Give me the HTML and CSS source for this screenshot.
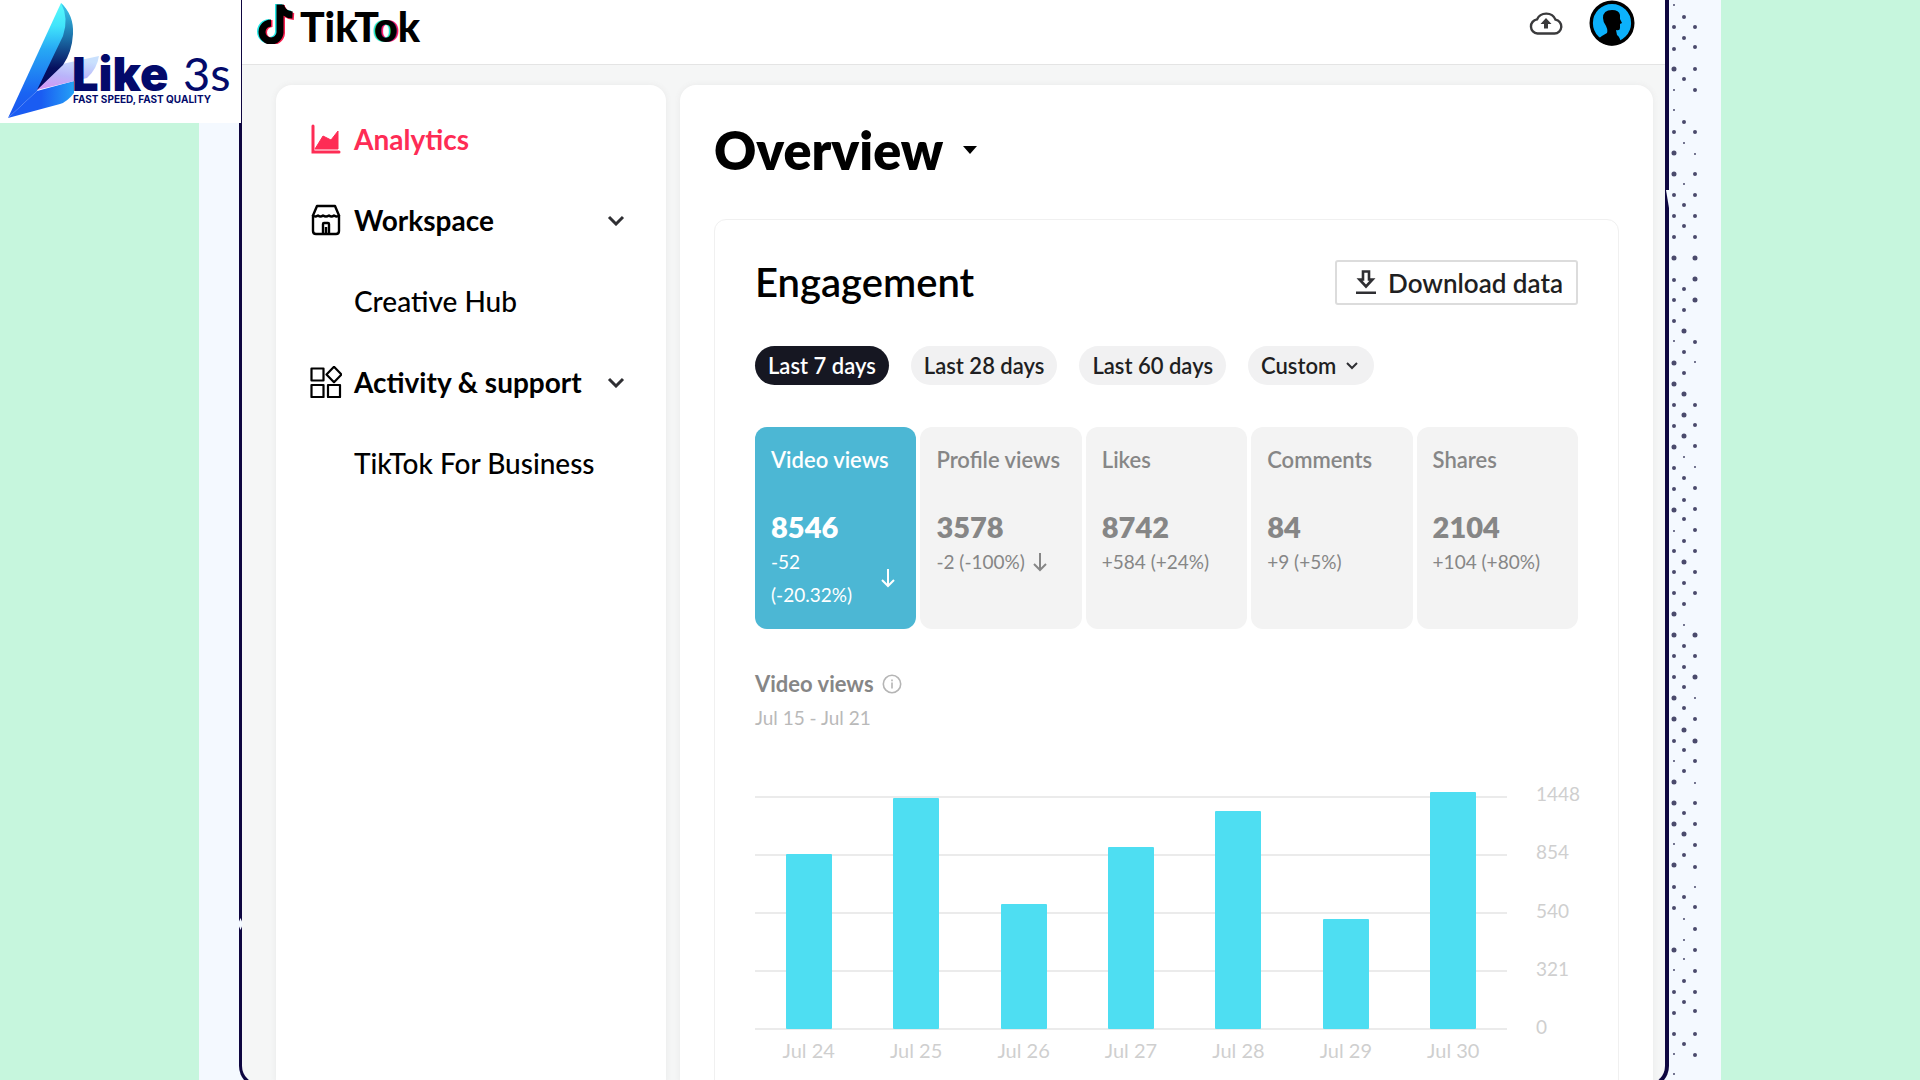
FILE: index.html
```html
<!DOCTYPE html>
<html lang="en">
<head>
<meta charset="utf-8">
<title>TikTok Analytics</title>
<link rel="stylesheet" href="styles.css">
</head>
<body>
<div class="stage">
  <svg class="dots" width="30" height="1080" viewBox="1670 0 30 1080" aria-hidden="true">
    <path class="dot-m" d="M1674 27h0M1674 49h0M1674 132h0M1674 195h0M1674 216h0M1674 237h0M1674 280h0M1674 300h0M1674 321h0M1674 405h0M1674 426h0M1674 468h0M1674 489h0M1674 551h0M1674 572h0M1674 593h0M1674 656h0M1674 677h0M1674 741h0M1674 887h0M1674 908h0M1674 992h0M1674 1013h0M1674 1034h0M1684 17h0M1684 38h0M1684 79h0M1684 122h0M1684 205h0M1684 226h0M1684 289h0M1684 310h0M1684 352h0M1684 373h0M1684 478h0M1684 500h0M1684 519h0M1684 541h0M1684 583h0M1684 604h0M1684 646h0M1684 667h0M1684 687h0M1684 708h0M1684 750h0M1684 771h0M1684 813h0M1684 855h0M1684 897h0M1684 981h0M1684 1002h0M1684 1044h0M1695 27h0M1695 47h0M1695 69h0M1695 90h0M1695 132h0M1695 174h0M1695 195h0M1695 216h0M1695 237h0M1695 342h0M1695 405h0M1695 425h0M1695 446h0M1695 488h0M1695 509h0M1695 530h0M1695 551h0M1695 572h0M1695 593h0M1695 656h0M1695 719h0M1695 761h0M1695 803h0M1695 824h0M1695 845h0M1695 867h0M1695 907h0M1695 929h0M1695 950h0M1695 971h0M1695 992h0M1695 1011h0M1695 1034h0M1695 1055h0"/>
    <path class="dot-l" d="M1674 153h0M1674 174h0M1674 258h0M1674 363h0M1674 384h0M1674 447h0M1674 510h0M1674 614h0M1674 635h0M1674 698h0M1674 719h0M1674 782h0M1674 803h0M1674 824h0M1674 865h0M1674 950h0M1684 331h0M1684 394h0M1684 415h0M1684 436h0M1684 562h0M1684 730h0M1684 834h0M1695 258h0M1695 279h0M1695 300h0M1695 635h0M1695 677h0M1695 741h0M1674 69h0"/>
    <path class="dot-s" d="M1674 5h0M1674 90h0M1674 110h0M1674 341h0M1674 531h0M1674 761h0M1674 844h0M1674 970h0M1674 1054h0M1674 1074h0M1684 143h0M1684 184h0M1684 457h0M1684 625h0M1684 919h0M1684 940h0M1684 959h0M1695 154h0M1695 362h0M1695 467h0M1695 698h0M1695 783h0M1695 887h0"/>
  </svg>
  <div class="frame">
    <header class="topbar">
      <a class="brand" href="#">
        <svg class="note" width="38" height="42" viewBox="0 0 38 42" aria-hidden="true">
          <g fill="none" stroke-width="7">
            <path stroke="#25e8e6" d="M21.500 2v28a9 9 0 1 1-9-9.500M22 4q3 8 12 8"/>
            <path stroke="#f81e4f" d="M24.500 3v28a9 9 0 1 1-9-9.500M25 6q3 8 12 8.500"/>
            <path stroke="#000" d="M23 2.500v28a9 9 0 1 1-9-9.500M23.500 4q3 8.500 12 9"/>
          </g>
        </svg>
        <span class="brand-name">TikT<span class="brand-o">o</span>k</span>
      </a>
      <button class="icon-button" aria-label="Upload">
        <svg width="34" height="24" viewBox="0 0 34 24" aria-hidden="true">
          <path fill="none" stroke="#3a3a3c" stroke-width="2.400" d="M8.500 22.500h17a7 7 0 0 0 1-13.900A10 9.500 0 0 0 8 8.400 7.100 7.100 0 0 0 8.500 22.500z"/>
          <path fill="#3a3a3c" d="M17 7l5.500 6h-3.500v4.500h-4V13h-3.500z"/>
        </svg>
      </button>
      <button class="icon-button" aria-label="Account">
        <svg width="46" height="46" viewBox="0 0 46 46" aria-hidden="true">
          <circle cx="23" cy="23" r="20.800" fill="#0cb1fb" stroke="#000" stroke-width="3.400"/>
          <path d="M9 39q5-4 9-6 1-3-1-7-3-4-3-8 0-8 9-8 7 0 8 5v4l2 4-2 1 0 4q0 3-4 2l1 5q3 2 4 8-12 7-23-4z"/>
        </svg>
      </button>
    </header>
    <div class="workspace">
      <nav class="sidebar" aria-label="Main">
        <a class="nav-item nav-active" href="#">
          <svg width="32" height="32" viewBox="0 0 32 32" aria-hidden="true"><path fill="none" stroke="#fe2c55" stroke-width="3" stroke-linecap="round" d="M3 3v26h26"/><path fill="#fe2c55" stroke="#fe2c55" stroke-linejoin="round" d="M5 26l8-13 8 4 7-9v18z"/></svg>
          <span>Analytics</span>
        </a>
        <button class="nav-item nav-group">
          <svg width="32" height="32" viewBox="0 0 32 32" fill="none" stroke="#000" stroke-width="2.400" aria-hidden="true"><path d="M7 2h18l4 9.500q-2 2-5 0-2.500 2-5 0-3 2-6 0-2.500 2-5 0-3 2-5 0z" stroke-linejoin="round"/><path d="M3 11v16q0 3 3 3h20q3 0 3-3V11M13 30V20q0-1 1-1h4q1 0 1 1v10M16 23v7"/></svg>
          <span>Workspace</span>
          <svg class="chevron" width="20" height="12" viewBox="0 0 20 12" aria-hidden="true"><path d="M3 3l7 7 7-7"/></svg>
        </button>
        <a class="nav-item nav-sub" href="#">Creative Hub</a>
        <button class="nav-item nav-group">
          <svg width="32" height="32" viewBox="0 0 32 32" fill="none" stroke="#000" stroke-width="2.200" stroke-linejoin="round" aria-hidden="true"><path d="M1.500 2.500h12v12h-12zM1.500 19h12v12h-12zM18 19h12v12H18zM24 .800l7.500 7.700-7.500 7.700-7.500-7.700z"/></svg>
          <span>Activity &amp; support</span>
          <svg class="chevron" width="20" height="12" viewBox="0 0 20 12" aria-hidden="true"><path d="M3 3l7 7 7-7"/></svg>
        </button>
        <a class="nav-item nav-sub" href="#">TikTok For Business</a>
      </nav>
      <main class="main">
        <h1 class="title"><button class="title-button">Overview
          <svg width="14" height="8" viewBox="0 0 14 8" aria-hidden="true"><path d="M0 0h14L7 8z"/></svg></button></h1>
        <section class="card">
          <div class="card-head">
            <h2>Engagement</h2>
            <button class="download">
              <svg width="20" height="25" viewBox="0 0 20 25" aria-hidden="true"><path fill="none" stroke="#2f2f33" stroke-width="2.600" d="M7 1.500h6v8h3.500L10 16.500 3.500 9.500H7z"/><path fill="#2f2f33" d="M0 21.500h20V24H0z"/></svg>
              Download data
            </button>
          </div>
          <div class="chips">
            <button class="chip chip-on">Last 7 days</button>
            <button class="chip">Last 28 days</button>
            <button class="chip">Last 60 days</button>
            <button class="chip chip-menu">Custom <svg width="12" height="8" viewBox="0 0 12 8" aria-hidden="true"><path d="M1 1l5 5 5-5"/></svg></button>
          </div>
          <div class="metrics">
            <button class="metric metric-on">
              <span class="metric-label">Video views</span>
              <strong>8546</strong>
              <span class="delta delta-wide"><span>-52<br>(-20.32%)</span><svg width="14" height="20" viewBox="0 0 14 20" aria-hidden="true"><path d="M7 1v17M1 12l6 6 6-6"/></svg></span>
            </button>
            <button class="metric">
              <span class="metric-label">Profile views</span>
              <strong>3578</strong>
              <span class="delta">-2 (-100%) <svg width="14" height="20" viewBox="0 0 14 20" aria-hidden="true"><path d="M7 1v17M1 12l6 6 6-6"/></svg></span>
            </button>
            <button class="metric">
              <span class="metric-label">Likes</span>
              <strong>8742</strong>
              <span class="delta">+584 (+24%)</span>
            </button>
            <button class="metric">
              <span class="metric-label">Comments</span>
              <strong>84</strong>
              <span class="delta">+9 (+5%)</span>
            </button>
            <button class="metric">
              <span class="metric-label">Shares</span>
              <strong>2104</strong>
              <span class="delta">+104 (+80%)</span>
            </button>
          </div>
          <h3 class="chart-title">Video views
            <svg width="20" height="20" viewBox="0 0 20 20" aria-hidden="true"><circle cx="10" cy="10" r="8.700" fill="none" stroke="#b5b5b5" stroke-width="1.600"/><path stroke="#b5b5b5" stroke-width="1.600" d="M10 8.500v6M10 5.500v1.700"/></svg></h3>
          <p class="chart-range">Jul 15 - Jul 21</p>
          <div class="chart">
            <div class="plot">
              <div class="bar" style="height:175px"></div>
              <div class="bar" style="height:231px"></div>
              <div class="bar" style="height:125px"></div>
              <div class="bar" style="height:182px"></div>
              <div class="bar" style="height:218px"></div>
              <div class="bar" style="height:110px"></div>
              <div class="bar" style="height:237px"></div>
            </div>
            <div class="scale"><span>1448</span><span>854</span><span>540</span><span>321</span><span>0</span></div>
            <div class="days"><span>Jul 24</span><span>Jul 25</span><span>Jul 26</span><span>Jul 27</span><span>Jul 28</span><span>Jul 29</span><span>Jul 30</span></div>
          </div>
        </section>
      </main>
    </div>
  </div>
</div>
<div class="badge">
  <svg width="241" height="123" viewBox="0 0 241 123" role="img" aria-label="Like 3s">
    <defs>
      <linearGradient id="blade" x1="0" y1="0" x2="0" y2="1"><stop offset="0" stop-color="#59fbfb"/><stop offset=".2" stop-color="#41e4fb"/><stop offset=".4" stop-color="#27a9f4"/><stop offset=".78" stop-color="#1a64f2"/><stop offset="1" stop-color="#1b55ee"/></linearGradient>
      <linearGradient id="edge" x1="0" y1="0" x2="0" y2="1"><stop offset="0" stop-color="#3ccdf2"/><stop offset=".4" stop-color="#1b6fa8"/><stop offset=".75" stop-color="#06105f"/><stop offset="1" stop-color="#02065c"/></linearGradient>
      <linearGradient id="foot" x1="0" y1="0" x2="1" y2="0"><stop offset="0" stop-color="#1a5cf2"/><stop offset=".5" stop-color="#1a5cf2"/><stop offset="1" stop-color="#25a0f6"/></linearGradient>
      <linearGradient id="wing" x1="0" y1="1" x2=".3" y2="0"><stop offset="0" stop-color="#d890f2"/><stop offset=".5" stop-color="#b9b4fa"/><stop offset="1" stop-color="#c9e0fd"/></linearGradient>
    </defs>
    <path fill="url(#foot)" d="M37 91l37-10v12q-7 9-14 11L8 118z"/>
    <path fill="url(#blade)" d="M61 3q11 9 7 32L37 91 8 118z"/>
    <path fill="url(#wing)" d="M37 90q10-14 25-26l37-8q-2 13-12 22z"/>
    <path fill="url(#edge)" d="M61 3q13 12 12 31-1 18-10 31L37 90l26-54q6-18-2-33z"/>
    <g class="badge-text">
      <text class="badge-like" x="72" y="91">Like</text>
      <text class="badge-3s" x="183" y="91">3s</text>
      <text class="badge-tag" x="73" y="103">FAST SPEED, FAST QUALITY</text>
    </g>
  </svg>
</div>
</body>
</html>
```

FILE: styles.css
```css
* { box-sizing: border-box; }

body {
  margin: 0;
  background: #c6f6dd;
  color: #000;
  font-family: Lato, "Open Sans", sans-serif;
  overflow: hidden;
}

button {
  margin: 0;
  padding: 0;
  border: 0;
  background: none;
  color: inherit;
  font: inherit;
  text-align: left;
  cursor: pointer;
}

a { color: inherit; text-decoration: none; }
h1, h2, h3, p { margin: 0; }
svg { flex: none; display: block; }

.stage {
  position: relative;
  height: 100vh;
  margin: 0 199px;
  padding: 0 52px 0 40px;
  overflow: hidden;
  background: #f4f9ff;
}

/* breaks in the hand-drawn outline */
.stage::before, .stage::after {
  content: "";
  position: absolute;
  z-index: 1;
  background: #f4f9ff;
}
.stage::before { left: 39px; top: 918px; width: 5px; height: 12px; clip-path: polygon(50% 0, 100% 50%, 50% 100%, 0 50%); }
.stage::after { right: 52px; top: 190px; width: 3px; height: 18px; clip-path: polygon(0 0, 100% 0, 100% 100%); }

.dots { position: absolute; top: 0; right: 21px; }
.dots path { stroke: #4a4a6c; stroke-linecap: round; }
.dots .dot-s { stroke-width: 2; }
.dots .dot-m { stroke-width: 4; }
.dots .dot-l { stroke-width: 5; }

.frame {
  position: relative;
  display: flex;
  flex-direction: column;
  height: calc(100vh + 8px);
  border: solid #0e0640;
  border-width: 0 4px 4px 3px;
  border-radius: 0 0 22px 22px;
  background: #f5f6f6;
  overflow: hidden;
}

.topbar {
  display: flex;
  align-items: center;
  gap: 26px;
  height: 65px;
  padding: 0 30px 18px 15px;
  border-bottom: 1px solid #e4e4e4;
  background: #fff;
}

.brand { display: flex; align-items: center; gap: 5px; height: 46px; margin-right: auto; }
.brand-name { padding-top: 8px; font-size: 41px; font-weight: 900; line-height: 46px; }
.brand-o { text-shadow: -2px 0 #25e8e6, 2px 0 #f81e4f; }

.workspace {
  flex: 1;
  display: flex;
  gap: 14px;
  padding: 20px 12px 0 34px;
}

.sidebar, .main {
  border-radius: 16px 16px 0 0;
  background: #fff;
  box-shadow: 0 0 6px #e9e9e9;
}

.sidebar { flex: none; width: 390px; padding: 14px 40px 0 34px; }

.nav-item {
  display: flex;
  align-items: center;
  gap: 12px;
  width: 100%;
  height: 81px;
  padding-bottom: 1px;
  font-size: 28px;
}
.nav-active { color: #fe2c55; font-weight: 700; }
.nav-group { font-weight: 700; }
.nav-sub { padding-left: 44px; font-weight: 500; }
.chevron { margin-left: auto; fill: none; stroke: #2f2f33; stroke-width: 3; }

.main { flex: 1; min-width: 0; padding: 33px 34px 0 34px; }
.title { height: 101px; font-size: 52px; line-height: 64px; font-weight: 800; }
.title-button { display: flex; align-items: center; gap: 20px; }

.card {
  height: 100%;
  padding: 40px 40px 0;
  border: 1px solid #f0f0f0;
  border-radius: 12px;
}
.card-head { display: flex; align-items: center; justify-content: space-between; }
.card-head h2 { padding-bottom: 2px; font-size: 40px; line-height: 42px; font-weight: 600; }

.download {
  display: flex;
  align-items: center;
  gap: 12px;
  height: 45px;
  padding: 0 13px 0 19px;
  border: 2px solid #dcdcdc;
  border-radius: 3px;
  color: #1f1f22;
  font-size: 26px;
  font-weight: 600;
}

.chips { display: flex; gap: 22px; margin-top: 41px; }
.chip {
  height: 39px;
  padding: 0 13px;
  border-radius: 20px;
  background: #f1f1f2;
  color: #1f1f22;
  font-size: 22px;
  font-weight: 600;
}
.chip-on { background: #161722; color: #fff; }
.chip-menu { display: flex; align-items: center; gap: 10px; padding-right: 16px; }
.chip-menu path { fill: none; stroke: #2f2f33; stroke-width: 2; }

.metrics { display: grid; grid-template-columns: repeat(5, 1fr); gap: 4px; margin-top: 42px; }
.metric {
  display: flex;
  flex-direction: column;
  height: 202px;
  padding: 15px 16px;
  border-radius: 12px;
  background: #f3f3f3;
  color: #868686;
}
.metric-on { background: #4cb7d4; color: #fff; }
.metric-label { margin-bottom: 30px; font-size: 22px; line-height: 36px; font-weight: 600; white-space: nowrap; }
.metric strong { font-size: 29px; line-height: 37px; font-weight: 800; }
.delta { display: flex; align-items: center; gap: 8px; font-size: 19px; line-height: 33px; white-space: nowrap; }
.delta-wide { justify-content: space-between; padding-right: 5px; align-self: stretch; }
.delta path { fill: none; stroke: currentColor; stroke-width: 2; }

.chart-title {
  display: flex;
  align-items: center;
  gap: 8px;
  margin-top: 38px;
  color: #868686;
  font-size: 22px;
  line-height: 34px;
  font-weight: 700;
}
.chart-range { color: #b9b9b9; font-size: 19px; line-height: 34px; }

.chart {
  display: grid;
  grid-template-columns: 1fr 42px;
  column-gap: 29px;
  margin-top: 61px;
  color: #cfcfcf;
  font-size: 20px;
  line-height: 20px;
}
.plot, .days { display: grid; grid-template-columns: repeat(7, 1fr); justify-items: center; }
.plot {
  grid-template-rows: 100%;
  height: 234px;
  align-items: end;
  padding-bottom: 1px;
  background: repeating-linear-gradient(#ebebeb 0 2px, transparent 2px 58px);
}
.bar { width: 46px; border-radius: 1px; background: #4edef2; }
.scale { display: flex; flex-direction: column; justify-content: space-between; margin: -12px 0 -7px; font-size: 19px; }
.days { margin-top: 10px; }

.badge { position: absolute; top: 0; left: 0; background: #fff; }
.badge-text { fill: #030a6b; }
.badge-like { font-family: Inter, sans-serif; font-size: 47px; font-weight: 900; }
.badge-3s { font-size: 47px; font-weight: 400; }
.badge-tag { font-family: Inter, sans-serif; font-size: 10px; font-weight: 700; }
```
